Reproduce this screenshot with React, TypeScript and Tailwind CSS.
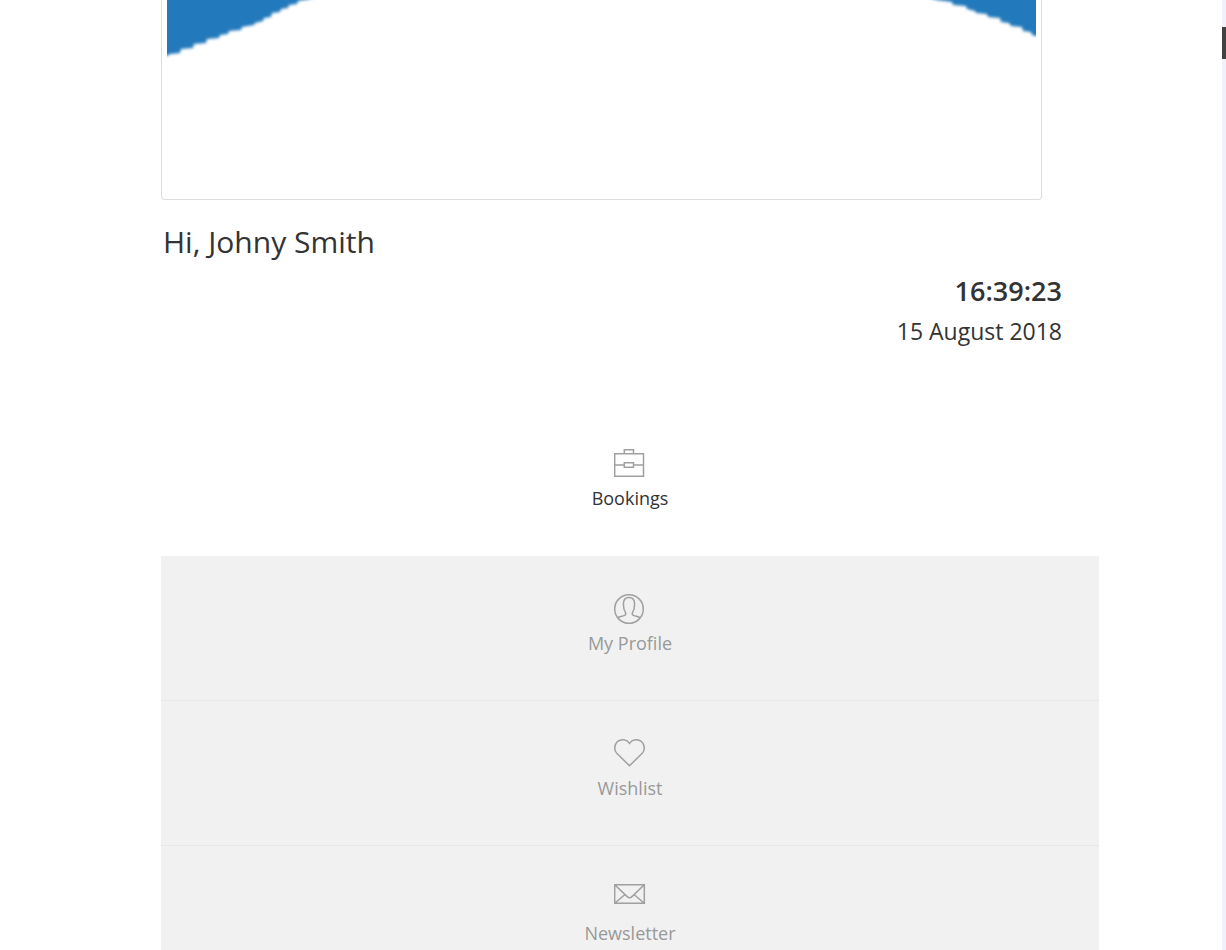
import type { ReactNode } from "react";

const iconProps = {
  width: 32,
  height: 32,
  viewBox: "0 0 32 32",
  fill: "none",
  stroke: "#a0a0a0",
  strokeWidth: 1.5,
  "aria-hidden": true,
} as const;

function BriefcaseIcon() {
  return (
    <svg {...iconProps}>
      <path d="M.7 5.7h28.800v22.600H.7zM10.300 5.500V1.700h9.200v3.800M.7 17h9.600M19.500 17h10M10.300 14.700h9.200v4.600h-9.200z" />
    </svg>
  );
}

function ProfileIcon() {
  return (
    <svg {...iconProps}>
      <circle cx="15" cy="16" r="14.300" />
      <path d="M3.700 24.800c1.800-1.100 4.600-1.500 6.400-2.200 1.900-.7 2-1.700 1.300-3.200-1.500-2.300-2-5-2-8.100 0-4 2-6.700 5.600-6.700s5.600 2.700 5.600 6.700c0 3.100-.5 5.800-2 8.100-.7 1.500-.6 2.500 1.300 3.200 1.800.7 4.600 1.100 6.400 2.200" />
    </svg>
  );
}

function HeartIcon() {
  return (
    <svg {...iconProps}>
      <path d="M15.500 27.800 2.800 15.300C-.2 12.200.2 6.400 3.300 3.700 7.300.500 12.800 1.200 15.500 5.300 18.200 1.200 23.700.5 27.700 3.700c3.100 2.700 3.500 8.500.5 11.600Z" />
    </svg>
  );
}

function MailIcon() {
  return (
    <svg {...iconProps}>
      <path d="M.7 1.700h29.600v18.600H.7zM1 2l12.200 11.600c1.500 1.500 3.300 1.500 4.800 0L30 2M1 20l10-8.500M30 20l-10-8.500" />
    </svg>
  );
}

type Tab = { label: string; icon: ReactNode };

const tabs: Tab[] = [
  { label: "Bookings", icon: <BriefcaseIcon /> },
  { label: "My Profile", icon: <ProfileIcon /> },
  { label: "Wishlist", icon: <HeartIcon /> },
  { label: "Newsletter", icon: <MailIcon /> },
];

function Avatar() {
  return (
    <div className="mr-[57px] h-[200px] rounded-b border border-t-0 border-[#ddd] px-[5px]">
      <svg
        className="block h-16 w-full"
        viewBox="0 0 869 64"
        preserveAspectRatio="none"
        role="img"
        aria-label="Profile picture"
      >
        <defs>
          <filter id="soft" x="-5%" y="-20%" width="110%" height="140%">
            <feGaussianBlur stdDeviation="1.6" />
          </filter>
        </defs>
        <g fill="#2479bb" filter="url(#soft)">
          <path d="M-10-20V57L0 56 3 54 13 53 14 49 26 48 27 44 39 43 40 39 52 38 53 35 61 34 62 31 74 30 75 27 87 25 88 23 96 21 97 18 104 17 105 13 113 12 114 9 121 8 122 5 130 4 131 1 143-1 155-7V-20Z" />
          <path d="M755-20V-5L770 0 785 2 786 5 799 6 800 9 808 11 809 13 820 14 821 17 833 18 834 22 842 23 844 26 855 27 856 31 864 32 865 35 869 36 880 38V-20Z" />
        </g>
      </svg>
    </div>
  );
}

export default function App() {
  return (
    <div className="flex h-screen overflow-hidden bg-white font-['Open_Sans',sans-serif] text-[#333]">
      <main className="min-w-0 flex-1 pr-[123px] pl-[161px]">
        <Avatar />
        <h1 className="mt-5 pl-0.5 text-[30px] leading-[44px]">Hi, Johny Smith</h1>
        <div className="pt-1 pr-[37px] text-right">
          <p className="text-[27px] leading-[46px] font-semibold">16:39:23</p>
          <p className="text-[23px] leading-[34px]">15 August 2018</p>
        </div>
        <nav className="mt-[63px]" aria-label="Account">
          {tabs.map((tab, i) => (
            <a
              key={tab.label}
              href="#"
              aria-current={i === 0 ? "page" : undefined}
              className={
                i === 0
                  ? "flex h-[145px] flex-col items-center pt-[37px] text-[#333]"
                  : "flex h-[145px] flex-col items-center border-b border-[#e7e7e7] bg-[#f1f1f1] pt-[37px] text-[#999]"
              }
            >
              {tab.icon}
              <span className="mt-1 text-lg leading-7">{tab.label}</span>
            </a>
          ))}
        </nav>
      </main>
      <div className="w-1 bg-[#f1f1f9] pt-[27px]">
        <div className="h-8 bg-[#424242]" />
      </div>
    </div>
  );
}
